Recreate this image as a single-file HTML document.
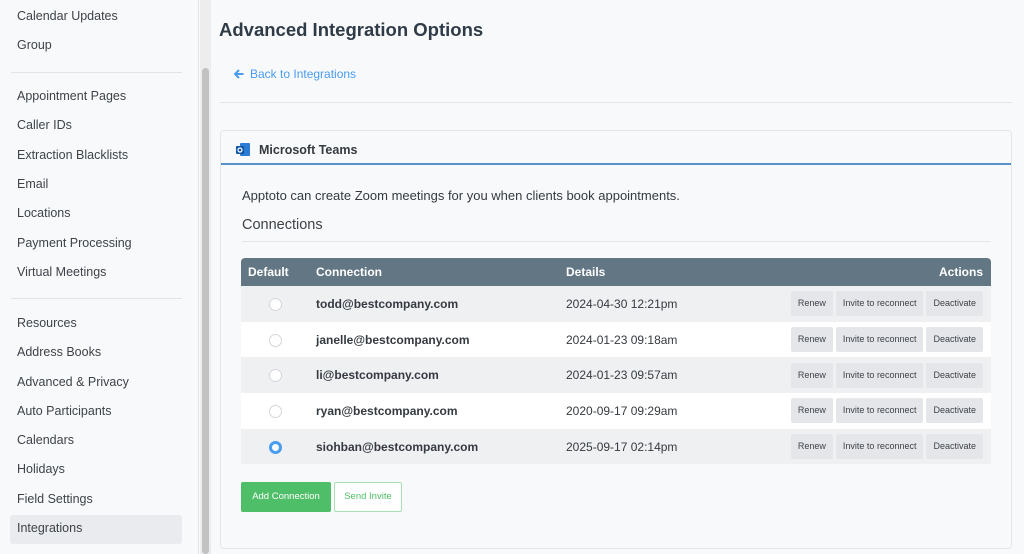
<!DOCTYPE html>
<html><head><meta charset="utf-8"><style>
*{box-sizing:border-box;margin:0;padding:0}
body{width:1024px;height:554px;overflow:hidden;background:#f8f9fa;font-family:"Liberation Sans",sans-serif;color:#343a40;position:relative}
.side{position:absolute;left:0;top:0;width:199px;height:554px;background:#f8f9fa;border-right:1px solid #e3e5e8}
.side div.i{position:absolute;left:17px;font-size:12.5px;color:#3d4349}
.side hr{position:absolute;left:11px;width:171px;border:0;border-top:1px solid #e2e4e7}
.sel{position:absolute;left:10px;top:515px;width:172px;height:29px;background:#e9ebee;border-radius:3px}
.track{position:absolute;left:200px;top:0;width:11px;height:554px;background:#ededed}
.thumb{position:absolute;left:202px;top:68px;width:7px;height:486px;background:#c2c2c2;border-radius:4px}
h1{position:absolute;left:219px;top:19px;font-size:18.5px;font-weight:bold;color:#2f3b47}
.back{position:absolute;left:234px;top:67px;font-size:12px;color:#4a9cf0}
.hr1{position:absolute;left:220px;top:102px;width:792px;border-top:1px solid #e3e5e8}
.card{position:absolute;left:220px;top:130px;width:792px;height:419px;border:1px solid #e3e5e8;border-radius:4px;background:#f8f9fa}
.ch{height:34px;border-bottom:2px solid #5a92c8;font-size:12.5px;font-weight:bold;color:#343a40;padding:12px 0 0 38px;position:relative}
.desc{position:absolute;left:21px;top:57px;font-size:13px;color:#343a40}
.conn{position:absolute;left:21px;top:86px;font-size:14.5px;color:#3d4349}
.hr2{position:absolute;left:21px;top:110px;width:749px;border-top:1px solid #e3e5e8}
table{position:absolute;left:20px;top:127px;width:750px;border-collapse:collapse;font-size:12px}
th{background:#627684;color:#fff;height:28px;text-align:left;font-weight:bold;font-size:12px}
td{height:35.7px;font-weight:normal}
tr:nth-child(even) td{background:#eff0f2}
tr:nth-child(odd) td{background:#fff}
.b{display:inline-block;background:#e4e6ea;color:#3d4349;font-size:9px;height:25px;line-height:25px;padding:0 7px;border-radius:2px;margin-left:3px}
.r{display:inline-block;width:13px;height:13px;border-radius:50%;border:1px solid #d3d6da;background:#fff;vertical-align:middle}
.r.on{border:3.5px solid #4a9cf0}
.btn1{position:absolute;left:20px;top:351px;width:90px;height:30px;background:#4fbe68;color:#fff;font-size:9.5px;line-height:30px;text-align:center;border-radius:2px}
.btn2{position:absolute;left:113px;top:351px;width:68px;height:30px;border:1px solid #a8dfb3;color:#4fbe68;font-size:9.5px;line-height:28px;text-align:center;border-radius:2px;background:#fff}
</style></head><body>
<div class="side">
<div class="i" style="top:9px">Calendar Updates</div>
<div class="i" style="top:38px">Group</div>
<hr style="top:72px">
<div class="i" style="top:89px">Appointment Pages</div>
<div class="i" style="top:118px">Caller IDs</div>
<div class="i" style="top:148px">Extraction Blacklists</div>
<div class="i" style="top:177px">Email</div>
<div class="i" style="top:206px">Locations</div>
<div class="i" style="top:236px">Payment Processing</div>
<div class="i" style="top:265px">Virtual Meetings</div>
<hr style="top:298px">
<div class="sel"></div>
<div class="i" style="top:316px">Resources</div>
<div class="i" style="top:345px">Address Books</div>
<div class="i" style="top:375px">Advanced &amp; Privacy</div>
<div class="i" style="top:404px">Auto Participants</div>
<div class="i" style="top:433px">Calendars</div>
<div class="i" style="top:462px">Holidays</div>
<div class="i" style="top:492px">Field Settings</div>
<div class="i" style="top:521px">Integrations</div>
</div>
<div class="track"></div><div class="thumb"></div>
<h1>Advanced Integration Options</h1>
<div class="back"><svg width="10" height="10" style="vertical-align:-1px;margin-right:6px"><path d="M5 1L1 5L5 9M1 5H9.5" stroke="#4a9cf0" stroke-width="2" fill="none"/></svg>Back to Integrations</div>
<div class="hr1"></div>
<div class="card">
<div class="ch"><svg style="position:absolute;left:15px;top:12px" width="14" height="13"><rect x="4" y="0" width="10" height="13" rx="1" fill="#2a7bd4"/><rect x="0" y="3" width="8" height="8" rx="1" fill="#1256a8"/><circle cx="4" cy="7" r="2" fill="none" stroke="#fff" stroke-width="1.2"/></svg>Microsoft Teams</div>
<div class="desc">Apptoto can create Zoom meetings for you when clients book appointments.</div>
<div class="conn">Connections</div>
<div class="hr2"></div>
<table>
<tr><th style="width:68px;padding-left:7px;border-radius:4px 0 0 0">Default</th><th style="width:250px;padding-left:7px">Connection</th><th style="padding-left:7px">Details</th><th style="text-align:right;padding-right:8px;border-radius:0 4px 0 0">Actions</th></tr>
<tr><td style="text-align:center"><span class="r"></span></td><td style="padding-left:7px;font-weight:bold">todd@bestcompany.com</td><td style="padding-left:7px">2024-04-30 12:21pm</td><td style="text-align:right;padding-right:8px"><span class="b">Renew</span><span class="b">Invite to reconnect</span><span class="b">Deactivate</span></td></tr>
<tr><td style="text-align:center"><span class="r"></span></td><td style="padding-left:7px;font-weight:bold">janelle@bestcompany.com</td><td style="padding-left:7px">2024-01-23 09:18am</td><td style="text-align:right;padding-right:8px"><span class="b">Renew</span><span class="b">Invite to reconnect</span><span class="b">Deactivate</span></td></tr>
<tr><td style="text-align:center"><span class="r"></span></td><td style="padding-left:7px;font-weight:bold">li@bestcompany.com</td><td style="padding-left:7px">2024-01-23 09:57am</td><td style="text-align:right;padding-right:8px"><span class="b">Renew</span><span class="b">Invite to reconnect</span><span class="b">Deactivate</span></td></tr>
<tr><td style="text-align:center"><span class="r"></span></td><td style="padding-left:7px;font-weight:bold">ryan@bestcompany.com</td><td style="padding-left:7px">2020-09-17 09:29am</td><td style="text-align:right;padding-right:8px"><span class="b">Renew</span><span class="b">Invite to reconnect</span><span class="b">Deactivate</span></td></tr>
<tr><td style="text-align:center"><span class="r on"></span></td><td style="padding-left:7px;font-weight:bold">siohban@bestcompany.com</td><td style="padding-left:7px">2025-09-17 02:14pm</td><td style="text-align:right;padding-right:8px"><span class="b">Renew</span><span class="b">Invite to reconnect</span><span class="b">Deactivate</span></td></tr>
</table>
<div class="btn1">Add Connection</div>
<div class="btn2">Send Invite</div>
</div>
</body></html>
